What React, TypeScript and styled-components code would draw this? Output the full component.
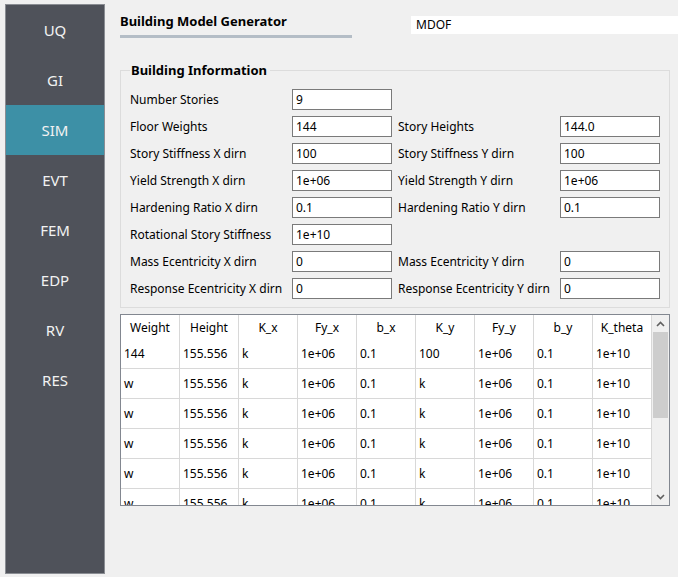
import React from "react";
import styled, { createGlobalStyle } from "styled-components";

const Global = createGlobalStyle`
  html, body { margin: 0; padding: 0; background: #f0f0f0; }
  body { font-family: "Noto Sans", "Segoe UI", sans-serif; font-size: 12px; color: #000; }
  * { box-sizing: border-box; }
`;

const Page = styled.div`
  width: 678px;
  height: 577px;
  display: flex;
  align-items: flex-start;
  padding: 4px 0 0 5px;
  overflow: hidden;
`;

const Sidebar = styled.nav`
  width: 100px;
  height: 570px;
  background: #4f525a;
  border: 1px solid #8a8d93;
  display: flex;
  flex-direction: column;
  flex-shrink: 0;
`;

const NavItem = styled.div<{ $active?: boolean }>`
  height: 50px;
  display: flex;
  align-items: center;
  justify-content: center;
  font-size: 15px;
  color: #f2f2f2;
  background: ${(p) => (p.$active ? "#3d90a6" : "transparent")};
`;

const Main = styled.div`
  flex: 1;
  padding: 6px 0 0 15px;
  display: flex;
  flex-direction: column;
  min-width: 0;
`;

const Header = styled.div`
  display: flex;
  align-items: flex-start;
  height: 51px;
`;

const TitleBlock = styled.div`
  width: 232px;
  display: flex;
  flex-direction: column;
`;

const Title = styled.div`
  font-weight: bold;
  font-size: 13px;
  line-height: 22px;
  height: 22px;
`;

const TitleBar = styled.div`
  margin-top: 3px;
  height: 3px;
  background: #b4bdc6;
`;

const TypeField = styled.div`
  margin-left: 59px;
  margin-top: 6px;
  height: 18px;
  flex: 1;
  background: #fff;
  padding-left: 5px;
  line-height: 18px;
  font-size: 12px;
`;

const Group = styled.fieldset`
  margin: 0;
  width: 550px;
  border: 1px solid #dcdcdc;
  padding: 8px 0 8px 9px;
`;

const Legend = styled.legend`
  font-weight: bold;
  font-size: 13px;
  padding: 0 3px 0 1px;
  margin-left: 0;
  line-height: 18px;
`;

const FormGrid = styled.div`
  display: grid;
  grid-template-columns: 162px 100px 168px 100px;
  grid-auto-rows: 21px;
  row-gap: 6px;
  margin-top: 2px;
`;

const Label = styled.div`
  display: flex;
  align-items: center;
  white-space: nowrap;
`;

const RightLabel = styled(Label)`
  padding-left: 6px;
`;

const Input = styled.div`
  background: #fff;
  border: 1px solid #7a7a7a;
  padding-left: 3px;
  display: flex;
  align-items: center;
`;

const Empty = styled.div``;

const TableBox = styled.div`
  margin-top: 6px;
  width: 550px;
  height: 192px;
  border: 1px solid #828790;
  background: #fff;
  display: flex;
  overflow: hidden;
`;

const TableArea = styled.div`
  width: 531px;
  height: 190px;
  overflow: hidden;
`;

const Row = styled.div<{ $head?: boolean }>`
  display: grid;
  grid-template-columns: repeat(9, 59px);
  height: ${(p) => (p.$head ? "24px" : "30px")};
  border-bottom: ${(p) => (p.$head ? "none" : "1px solid #d8d8d8")};
`;

const Cell = styled.div<{ $head?: boolean }>`
  border-right: 1px solid #d8d8d8;
  display: flex;
  align-items: center;
  justify-content: ${(p) => (p.$head ? "center" : "flex-start")};
  padding-left: ${(p) => (p.$head ? "0" : "3px")};
  white-space: nowrap;
  overflow: hidden;
`;

const Scrollbar = styled.div`
  width: 17px;
  height: 190px;
  background: #f0f0f0;
  display: flex;
  flex-direction: column;
  align-items: center;
`;

const ArrowBtn = styled.div`
  height: 17px;
  width: 17px;
  display: flex;
  align-items: center;
  justify-content: center;
`;

const Thumb = styled.div`
  width: 15px;
  height: 86px;
  background: #cdcdcd;
`;

const Track = styled.div`
  flex: 1;
`;

const Chevron = ({ up }: { up?: boolean }) => (
  <svg width="9" height="6" viewBox="0 0 9 6">
    <path
      d={up ? "M1 5 L4.5 1.5 L8 5" : "M1 1 L4.5 4.5 L8 1"}
      fill="none"
      stroke="#606060"
      strokeWidth="1.6"
    />
  </svg>
);

const navItems = ["UQ", "GI", "SIM", "EVT", "FEM", "EDP", "RV", "RES"];

const formRows: [string, string, string | null, string | null][] = [
  ["Number Stories", "9", null, null],
  ["Floor Weights", "144", "Story Heights", "144.0"],
  ["Story Stiffness X dirn", "100", "Story Stiffness Y dirn", "100"],
  ["Yield Strength X dirn", "1e+06", "Yield Strength Y dirn", "1e+06"],
  ["Hardening Ratio X dirn", "0.1", "Hardening Ratio Y dirn", "0.1"],
  ["Rotational Story Stiffness", "1e+10", null, null],
  ["Mass Ecentricity X dirn", "0", "Mass Ecentricity Y dirn", "0"],
  ["Response Ecentricity X dirn", "0", "Response Ecentricity Y dirn", "0"],
];

const headers = ["Weight", "Height", "K_x", "Fy_x", "b_x", "K_y", "Fy_y", "b_y", "K_theta"];

const dataRows: string[][] = [
  ["144", "155.556", "k", "1e+06", "0.1", "100", "1e+06", "0.1", "1e+10"],
  ...Array.from({ length: 5 }, () => ["w", "155.556", "k", "1e+06", "0.1", "k", "1e+06", "0.1", "1e+10"]),
];

export default function App() {
  return (
    <>
      <Global />
      <Page>
        <Sidebar>
          {navItems.map((n) => (
            <NavItem key={n} $active={n === "SIM"}>
              {n}
            </NavItem>
          ))}
        </Sidebar>
        <Main>
          <Header>
            <TitleBlock>
              <Title>Building Model Generator</Title>
              <TitleBar />
            </TitleBlock>
            <TypeField>MDOF</TypeField>
          </Header>
          <Group>
            <Legend>Building Information</Legend>
            <FormGrid>
              {formRows.map(([l, v, rl, rv], i) => (
                <React.Fragment key={i}>
                  <Label>{l}</Label>
                  <Input>{v}</Input>
                  {rl ? <RightLabel>{rl}</RightLabel> : <Empty />}
                  {rv ? <Input>{rv}</Input> : <Empty />}
                </React.Fragment>
              ))}
            </FormGrid>
          </Group>
          <TableBox>
            <TableArea>
              <Row $head>
                {headers.map((h) => (
                  <Cell key={h} $head>
                    {h}
                  </Cell>
                ))}
              </Row>
              {dataRows.map((r, i) => (
                <Row key={i}>
                  {r.map((c, j) => (
                    <Cell key={j}>{c}</Cell>
                  ))}
                </Row>
              ))}
            </TableArea>
            <Scrollbar>
              <ArrowBtn>
                <Chevron up />
              </ArrowBtn>
              <Thumb />
              <Track />
              <ArrowBtn>
                <Chevron />
              </ArrowBtn>
            </Scrollbar>
          </TableBox>
        </Main>
      </Page>
    </>
  );
}
